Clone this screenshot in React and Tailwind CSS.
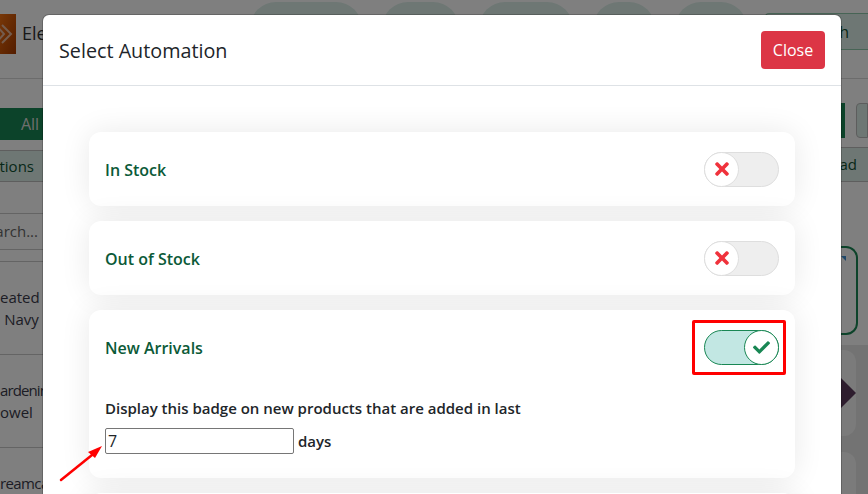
import { FaCheck, FaTimes } from 'react-icons/fa';

const font = { fontFamily: '"Open Sans", "Noto Sans", sans-serif' };

function Toggle({ on }) {
  if (on) {
    return (
      <div className="flex h-[35px] w-[75px] justify-end rounded-full border border-[#198754] bg-[#c2e7e3]">
        <div className="-m-px flex h-[35px] w-[35px] items-center justify-center rounded-full border border-[#198754] bg-white">
          <FaCheck size={17} className="text-[#198754]" />
        </div>
      </div>
    );
  }
  return (
    <div className="flex h-[35px] w-[75px] rounded-full border border-[#dedede] bg-[#eeeeee]">
      <div className="-m-px flex h-[35px] w-[35px] items-center justify-center rounded-full border border-[#dedede] bg-white">
        <FaTimes size={20} className="text-[#f0323c]" />
      </div>
    </div>
  );
}

function AutomationCard({ label, on, boxed, children }) {
  return (
    <div className="rounded-xl bg-white px-4 shadow-[0_0_30px_rgba(0,0,0,0.09)]">
      <div className="flex h-[74px] items-center justify-between">
        <span className="pt-[2px] text-base font-semibold text-[#0b5a38]">{label}</span>
        <div className="relative">
          <Toggle on={on} />
          {boxed && <div className="absolute -bottom-[10px] -left-3 -right-[7px] -top-[10px] rounded-[2px] border-[3px] border-[#ff0000]" />}
        </div>
      </div>
      {children}
    </div>
  );
}

function Row({ children }) {
  return (
    <div className="flex h-[93px] flex-col justify-center border-b border-[#c8c8c8] text-[15px] leading-[22px] whitespace-nowrap text-[#3a3a4a]">
      {children}
    </div>
  );
}

function Logo() {
  return (
    <div className="h-10 w-4 overflow-hidden bg-gradient-to-br from-[#f07010] to-[#a83a00]">
      <svg width="16" height="40" viewBox="0 0 16 40" fill="none" stroke="#e8b89a" strokeWidth="2">
        <path d="M-4 11 L4 20 L-4 29" />
        <path d="M2 11 L11 20 L2 29" />
      </svg>
    </div>
  );
}

function Page() {
  return (
    <div className="h-[494px] w-[868px] overflow-hidden bg-white">
      <div className="flex h-[79px] border-b border-[#d8d8d8]">
        <div className="flex h-[54px] w-[250px] items-end gap-[6px]">
          <Logo />
          <span className="mb-[7px] text-lg text-[#333]">Ele</span>
        </div>
        <div className="flex h-[40px] flex-1 gap-5 pt-[2px]">
          <div className="w-[112px] rounded-t-[26px] bg-[#dcefe9]" />
          <div className="w-[77px] rounded-t-[26px] bg-[#dcefe9]" />
          <div className="w-[94px] rounded-t-[26px] bg-[#dcefe9]" />
          <div className="w-[62px] rounded-t-[26px] bg-[#dcefe9]" />
          <div className="w-[72px] rounded-t-[26px] bg-[#dcefe9]" />
        </div>
        <div className="mt-[13px] flex h-[37px] w-[103px] items-center justify-end rounded-l border-y border-l border-[#8fc9ab] bg-[#dcefe9] pr-[19px] text-base text-[#0f5132]">
          h
        </div>
      </div>
      <div className="flex justify-between">
        <div className="w-[44px] overflow-hidden">
          <div className="mt-[29px] flex h-[32px] items-center justify-center bg-[#198754] pl-4 text-base text-[#dddddd]">All</div>
          <div className="mt-[10px] flex h-[32px] items-center justify-end whitespace-nowrap border-y border-[#bdbdbd] bg-[#dcefe9] pr-[10px] text-[15px] text-[#0f5132]">tions</div>
          <div className="mt-[31px] flex h-[37px] items-center justify-end whitespace-nowrap border-y border-[#c8c8c8] pr-[6px] text-[15px] text-[#666]">arch...</div>
          <div className="mt-[11px] border-t border-[#c8c8c8]">
            <Row>
              <span>eated</span>
              <span className="-ml-[8px]">a Navy</span>
            </Row>
            <Row>
              <span className="tracking-[-0.9px]">ardening</span>
              <span>owel</span>
            </Row>
            <div className="pt-[24px] text-[15px] tracking-[-0.6px] whitespace-nowrap text-[#3a3a4a]">reamca</div>
          </div>
        </div>
        <div className="w-[27px]">
          <div className="mt-[24px] flex h-[35px] gap-[11px]">
            <div className="w-[4px] bg-[#198754]" />
            <div className="w-[12px] rounded-l border border-[#bbb] bg-[#dcefe9]" />
          </div>
          <div className="mt-[9px] flex h-[35px] items-center justify-end border-y border-[#bdbdbd] bg-[#dcefe9] pr-[11px] text-[15px] text-[#0f5132]">ad</div>
          <div className="mt-[64px] h-[89px] w-[17px] rounded-r-xl border-y-2 border-r-2 border-[#198754]">
            <div className="mt-2 h-0 w-0 border-l-[5px] border-t-[5px] border-l-transparent border-t-[#3f8fd0]" />
          </div>
          <div className="mt-[10px] h-[150px] bg-[#e6e6e6] pt-[5px]">
            <div className="flex h-[86px] w-[15px] items-center rounded-r-xl bg-[#f6f6f6]">
              <div className="h-0 w-0 border-y-[15px] border-l-[15px] border-y-transparent border-l-[#5c3a5c]" />
            </div>
            <div className="mt-4 h-[60px] w-[15px] rounded-r-xl bg-[#f6f6f6]" />
          </div>
        </div>
      </div>
    </div>
  );
}

export default function App() {
  return (
    <div className="relative h-[494px] w-[868px] overflow-hidden" style={font}>
      <Page />
      <div className="absolute inset-0 bg-black/50" />
      <div className="absolute left-[43px] top-[15px] w-[798px] rounded-t-md bg-white shadow-[0_0_0_1px_rgba(0,0,0,0.2)]">
        <div className="flex h-[71px] items-center justify-between border-b border-[#dee2e6] px-4">
          <h5 className="pt-[2px] text-[19.75px] font-medium text-[#212529]">Select Automation</h5>
          <button className="h-[38px] w-16 rounded bg-[#dc3545] text-base text-white">Close</button>
        </div>
        <div className="flex flex-col gap-[15px] px-[46px] pt-[46px]">
          <AutomationCard label="In Stock" />
          <AutomationCard label="Out of Stock" />
          <AutomationCard label="New Arrivals" on boxed>
            <div className="h-[94px] pt-[13px]">
              <p className="text-[15px] font-semibold leading-[22px] text-[#212529]">Display this badge on new products that are added in last</p>
              <div className="mt-[9px] flex items-center gap-1">
                <input
                  readOnly
                  value="7"
                  className="h-[26px] w-[189px] rounded-[2px] border border-[#767676] px-[2px] text-base text-[#212529]"
                />
                <span className="text-[15px] font-semibold text-[#212529]">days</span>
              </div>
            </div>
          </AutomationCard>
          <AutomationCard label="" />
        </div>
      </div>
      <svg className="absolute left-[56px] top-[442px]" width="50" height="44" viewBox="0 0 50 44">
        <path d="M5 38 L36 13" stroke="#f00" strokeWidth="2.5" strokeLinecap="round" />
        <path d="M46 4 L32 10 L39 16 Z" fill="#f00" />
      </svg>
    </div>
  );
}
